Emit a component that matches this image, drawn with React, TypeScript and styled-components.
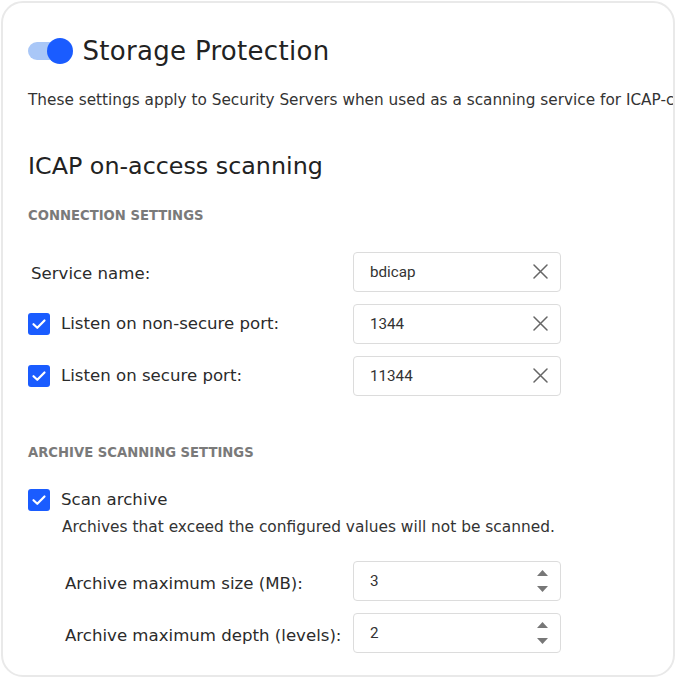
import React from 'react';
import styled, { createGlobalStyle } from 'styled-components';

const Global = createGlobalStyle`
  html, body { margin: 0; padding: 0; background: #fff; }
  body { font-family: "DejaVu Sans", sans-serif; color: #2b2b2b; }
`;

const Card = styled.div`
  box-sizing: border-box;
  margin: 1px;
  width: 674px;
  height: 676px;
  border: 2.5px solid #e9e9e9;
  border-radius: 22px;
  overflow: hidden;
  padding: 23.5px 0 0 25px;
`;

const Header = styled.div`
  display: flex;
  align-items: center;
  gap: 8.5px;
  height: 48px;
`;

const Toggle = styled.div`
  position: relative;
  width: 46px;
  height: 26px;
  flex: none;
`;

const Track = styled.div`
  position: absolute;
  left: 0;
  top: 4px;
  width: 40px;
  height: 18px;
  border-radius: 9px;
  background: #a9c7f7;
`;

const Knob = styled.div`
  position: absolute;
  left: 19px;
  top: 0;
  width: 26px;
  height: 26px;
  border-radius: 50%;
  background: #1a5cff;
`;

const Title = styled.h1`
  margin: 0;
  font-size: 26px;
  font-weight: 500;
  letter-spacing: 0.3px;
  color: #222;
  white-space: nowrap;
`;

const Desc = styled.p`
  margin: 15px 0 0 0;
  font-size: 15.3px;
  line-height: 20px;
  color: #333;
  white-space: nowrap;
`;

const Subtitle = styled.h2`
  margin: 41px 0 0 0;
  font-size: 23.8px;
  line-height: 30px;
  font-weight: 400;
  color: #222;
  white-space: nowrap;
`;

const SectionLabel = styled.div<{ $top: number }>`
  margin: ${(p) => p.$top}px 0 0 0;
  font-size: 13.2px;
  line-height: 16px;
  font-weight: 700;
  color: #7a7a7a;
  white-space: nowrap;
`;

const Rows = styled.div<{ $top: number; $indent?: number }>`
  display: flex;
  flex-direction: column;
  gap: 12px;
  margin-top: ${(p) => p.$top}px;
  padding-left: ${(p) => p.$indent || 0}px;
`;

const Row = styled.div<{ $labelW: number }>`
  display: grid;
  grid-template-columns: ${(p) => p.$labelW}px 208px;
  align-items: center;
  height: 40px;
`;

const LabelBox = styled.label<{ $shift?: number }>`
  display: flex;
  align-items: center;
  gap: 11px;
  font-size: 16.6px;
  color: #2b2b2b;
  white-space: nowrap;
  padding-top: ${(p) => p.$shift || 0}px;
`;

const Check = styled.span`
  width: 22px;
  height: 22px;
  border-radius: 3px;
  background: #1a5cff;
  display: flex;
  align-items: center;
  justify-content: center;
  flex: none;
`;

const PlainLabel = styled.span`
  padding-left: 3px;
`;

const Field = styled.div`
  box-sizing: border-box;
  height: 40px;
  border: 1px solid #dcdcdc;
  border-radius: 4px;
  display: flex;
  align-items: center;
  padding: 0 12px 0 16px;
  font-family: Roboto, "Liberation Sans", sans-serif;
  font-size: 15.2px;
  color: #333;
`;

const Value = styled.span`
  flex: 1;
`;

const Spinner = styled.div`
  display: flex;
  flex-direction: column;
  gap: 10px;
`;

const ScanRow = styled.div`
  margin-top: 28px;
  display: flex;
  flex-direction: column;
`;

const Hint = styled.div`
  margin: 6px 0 0 34px;
  font-size: 15.4px;
  line-height: 20px;
  color: #333;
  white-space: nowrap;
`;

const Tick = () => (
  <svg width="16" height="16" viewBox="0 0 16 16">
    <path d="M2.5 8.2 L6.3 11.8 L13.5 4.5" fill="none" stroke="#fff" strokeWidth="2.2" strokeLinecap="round" strokeLinejoin="round" />
  </svg>
);

const ClearIcon = () => (
  <svg width="15" height="15" viewBox="0 0 15 15">
    <path d="M1 1 L14 14 M14 1 L1 14" stroke="#666" strokeWidth="1.5" strokeLinecap="round" />
  </svg>
);

const Arrow = ({ down }: { down?: boolean }) => (
  <svg width="11" height="6" viewBox="0 0 11 6">
    <path d={down ? 'M0 0 H11 L5.5 6 Z' : 'M0 6 H11 L5.5 0 Z'} fill="#777" />
  </svg>
);

const TextField = ({ value }: { value: string }) => (
  <Field>
    <Value>{value}</Value>
    <ClearIcon />
  </Field>
);

const NumberField = ({ value }: { value: string }) => (
  <Field>
    <Value>{value}</Value>
    <Spinner>
      <Arrow />
      <Arrow down />
    </Spinner>
  </Field>
);

export default function App() {
  return (
    <>
      <Global />
      <Card>
        <Header>
          <Toggle>
            <Track />
            <Knob />
          </Toggle>
          <Title>Storage Protection</Title>
        </Header>
        <Desc>These settings apply to Security Servers when used as a scanning service for ICAP-compliant devices.</Desc>
        <Subtitle>ICAP on-access scanning</Subtitle>
        <SectionLabel $top={27}>CONNECTION SETTINGS</SectionLabel>
        <Rows $top={28}>
          <Row $labelW={325}>
            <LabelBox $shift={3}><PlainLabel>Service name:</PlainLabel></LabelBox>
            <TextField value="bdicap" />
          </Row>
          <Row $labelW={325}>
            <LabelBox><Check><Tick /></Check>Listen on non-secure port:</LabelBox>
            <TextField value="1344" />
          </Row>
          <Row $labelW={325}>
            <LabelBox><Check><Tick /></Check>Listen on secure port:</LabelBox>
            <TextField value="11344" />
          </Row>
        </Rows>
        <SectionLabel $top={49}>ARCHIVE SCANNING SETTINGS</SectionLabel>
        <ScanRow>
          <LabelBox><Check><Tick /></Check>Scan archive</LabelBox>
          <Hint>Archives that exceed the configured values will not be scanned.</Hint>
        </ScanRow>
        <Rows $top={24} $indent={37}>
          <Row $labelW={288}>
            <LabelBox $shift={6}>Archive maximum size (MB):</LabelBox>
            <NumberField value="3" />
          </Row>
          <Row $labelW={288}>
            <LabelBox $shift={5}>Archive maximum depth (levels):</LabelBox>
            <NumberField value="2" />
          </Row>
        </Rows>
      </Card>
    </>
  );
}
